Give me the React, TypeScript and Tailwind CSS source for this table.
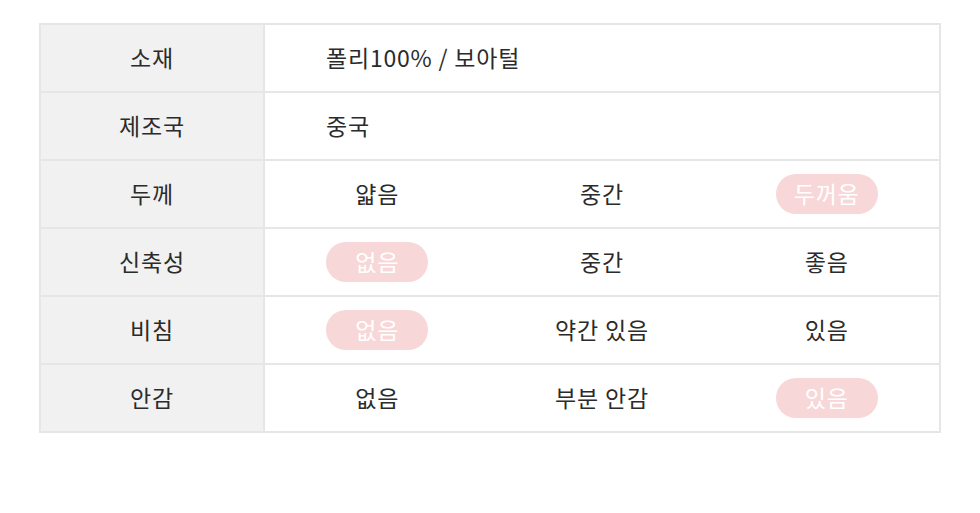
import React from 'react';

type Cell = { text: string; active?: boolean };

const rows: { label: string; value?: string; options?: Cell[] }[] = [
  { label: '소재', value: '폴리100% / 보아털' },
  { label: '제조국', value: '중국' },
  { label: '두께', options: [{ text: '얇음' }, { text: '중간' }, { text: '두꺼움', active: true }] },
  { label: '신축성', options: [{ text: '없음', active: true }, { text: '중간' }, { text: '좋음' }] },
  { label: '비침', options: [{ text: '없음', active: true }, { text: '약간 있음' }, { text: '있음' }] },
  { label: '안감', options: [{ text: '없음' }, { text: '부분 안감' }, { text: '있음', active: true }] },
];

const App: React.FC = () => {
  return (
    <div
      className="w-[980px] h-[513px] bg-white pt-[23px] pl-[39px]"
      style={{ fontFamily: '"Noto Sans CJK KR", "Noto Sans", sans-serif' }}
    >
      <table className="w-[902px] border-collapse border-2 border-[#e6e6e6] text-[23px] leading-none tracking-[0.8px] text-[#2b2b2b]">
        <tbody>
          {rows.map((row) => (
            <tr key={row.label} className="h-[68px]">
              <td className="w-[224px] border-2 border-[#e6e6e6] bg-[#f1f1f1] text-center p-0 pb-[2px]">
                {row.label}
              </td>
              <td className="border-2 border-[#e6e6e6] p-0">
                {row.value ? (
                  <div className="pl-[61px] pb-[2px]">{row.value}</div>
                ) : (
                  <div className="grid grid-cols-3">
                    {row.options!.map((opt) => (
                      <div key={opt.text} className="flex justify-center">
                        {opt.active ? (
                          <span className="flex h-[40px] w-[102px] items-center justify-center rounded-full bg-[#f8d7d8] pb-[2px] text-white">
                            {opt.text}
                          </span>
                        ) : (
                          <span className="flex h-[40px] items-center pb-[2px]">{opt.text}</span>
                        )}
                      </div>
                    ))}
                  </div>
                )}
              </td>
            </tr>
          ))}
        </tbody>
      </table>
    </div>
  );
};

export default App;
